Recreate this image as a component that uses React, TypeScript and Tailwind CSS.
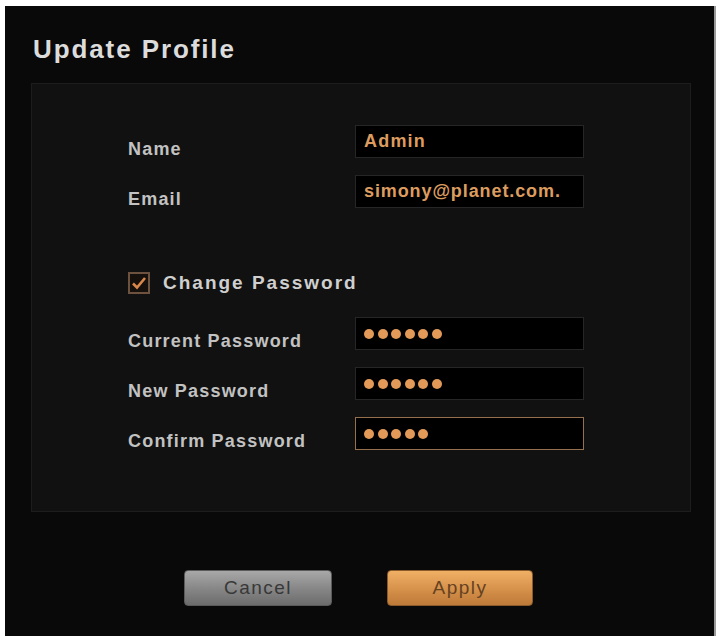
import React from 'react'

const font = { fontFamily: '"Liberation Sans", Arial, sans-serif' }

function Field({ label, children, active }: { label: string; children: React.ReactNode; active?: boolean }) {
  return (
    <div className="flex items-start h-[33px]">
      <div className="w-[227px] mt-[14px] leading-[20px] text-[18px] font-bold tracking-[1.2px] text-[#c2c2c2]">
        {label}
      </div>
      <div
        className={
          'w-[229px] h-[33px] bg-black flex items-center pl-2 overflow-hidden whitespace-nowrap border ' +
          (active ? 'border-[#96704c]' : 'border-[#262626]')
        }
      >
        {children}
      </div>
    </div>
  )
}

function Dots({ n }: { n: number }) {
  return (
    <div className="flex gap-[3.5px]">
      {Array.from({ length: n }).map((_, i) => (
        <span key={i} className="w-[10px] h-[10px] rounded-full bg-[#e39a58]" />
      ))}
    </div>
  )
}

export default function App() {
  return (
    <div className="w-[721px] h-[642px] bg-white pt-[6px] pl-[5px]" style={font}>
      <div className="w-[711px] h-[630px] bg-[#090909] flex flex-col border-r-2 border-[#9a9a9a]">
        <h1 className="pl-[28px] pt-[29px] h-[77px] text-[26px] font-bold tracking-[1.9px] text-[#dcdcdc] leading-[28px]">
          Update Profile
        </h1>

        {/* form panel */}
        <div className="ml-[26px] w-[660px] h-[429px] bg-[#111111] border border-[#1d1d1d] pl-[96px] pt-[41px]">
          <div className="flex flex-col gap-[17px]">
            <Field label="Name">
              <span className="text-[18px] font-bold tracking-[1.2px] text-[#dd9c5f]">Admin</span>
            </Field>
            <Field label="Email">
              <span className="text-[18px] font-bold tracking-[0.9px] text-[#dd9c5f]">simony@planet.com.</span>
            </Field>
          </div>

          <div className="flex items-center mt-[64px] h-[22px]">
            <div className="w-[22px] h-[22px] border-2 border-[#6e5240] bg-[#16100c] flex items-center justify-center">
              <svg width="16" height="14" viewBox="0 0 16 14">
                <path d="M2 7.5 L6 11.5 L14 2" fill="none" stroke="#d9874a" strokeWidth="2.6" />
              </svg>
            </div>
            <span className="ml-[13px] text-[19px] font-bold tracking-[2px] text-[#cfcfcf]">Change Password</span>
          </div>

          <div className="flex flex-col gap-[17px] mt-[23px]">
            <Field label="Current Password">
              <Dots n={6} />
            </Field>
            <Field label="New Password">
              <Dots n={6} />
            </Field>
            <Field label="Confirm Password" active>
              <Dots n={5} />
            </Field>
          </div>
        </div>

        <div className="flex justify-center gap-[55px] mt-[58px] pr-[2px]">
          <button className="w-[148px] h-[36px] rounded-[4px] border border-[#5a5a5a] bg-gradient-to-b from-[#a8a8a8] via-[#888888] to-[#6c6c6c] text-[19px] tracking-[1.5px] text-[#383838]">
            Cancel
          </button>
          <button className="w-[146px] h-[36px] rounded-[4px] border border-[#8a5a2a] bg-gradient-to-b from-[#f0b066] via-[#d8934c] to-[#bd7a38] text-[19px] tracking-[1.5px] text-[#654222]">
            Apply
          </button>
        </div>
      </div>
    </div>
  )
}
